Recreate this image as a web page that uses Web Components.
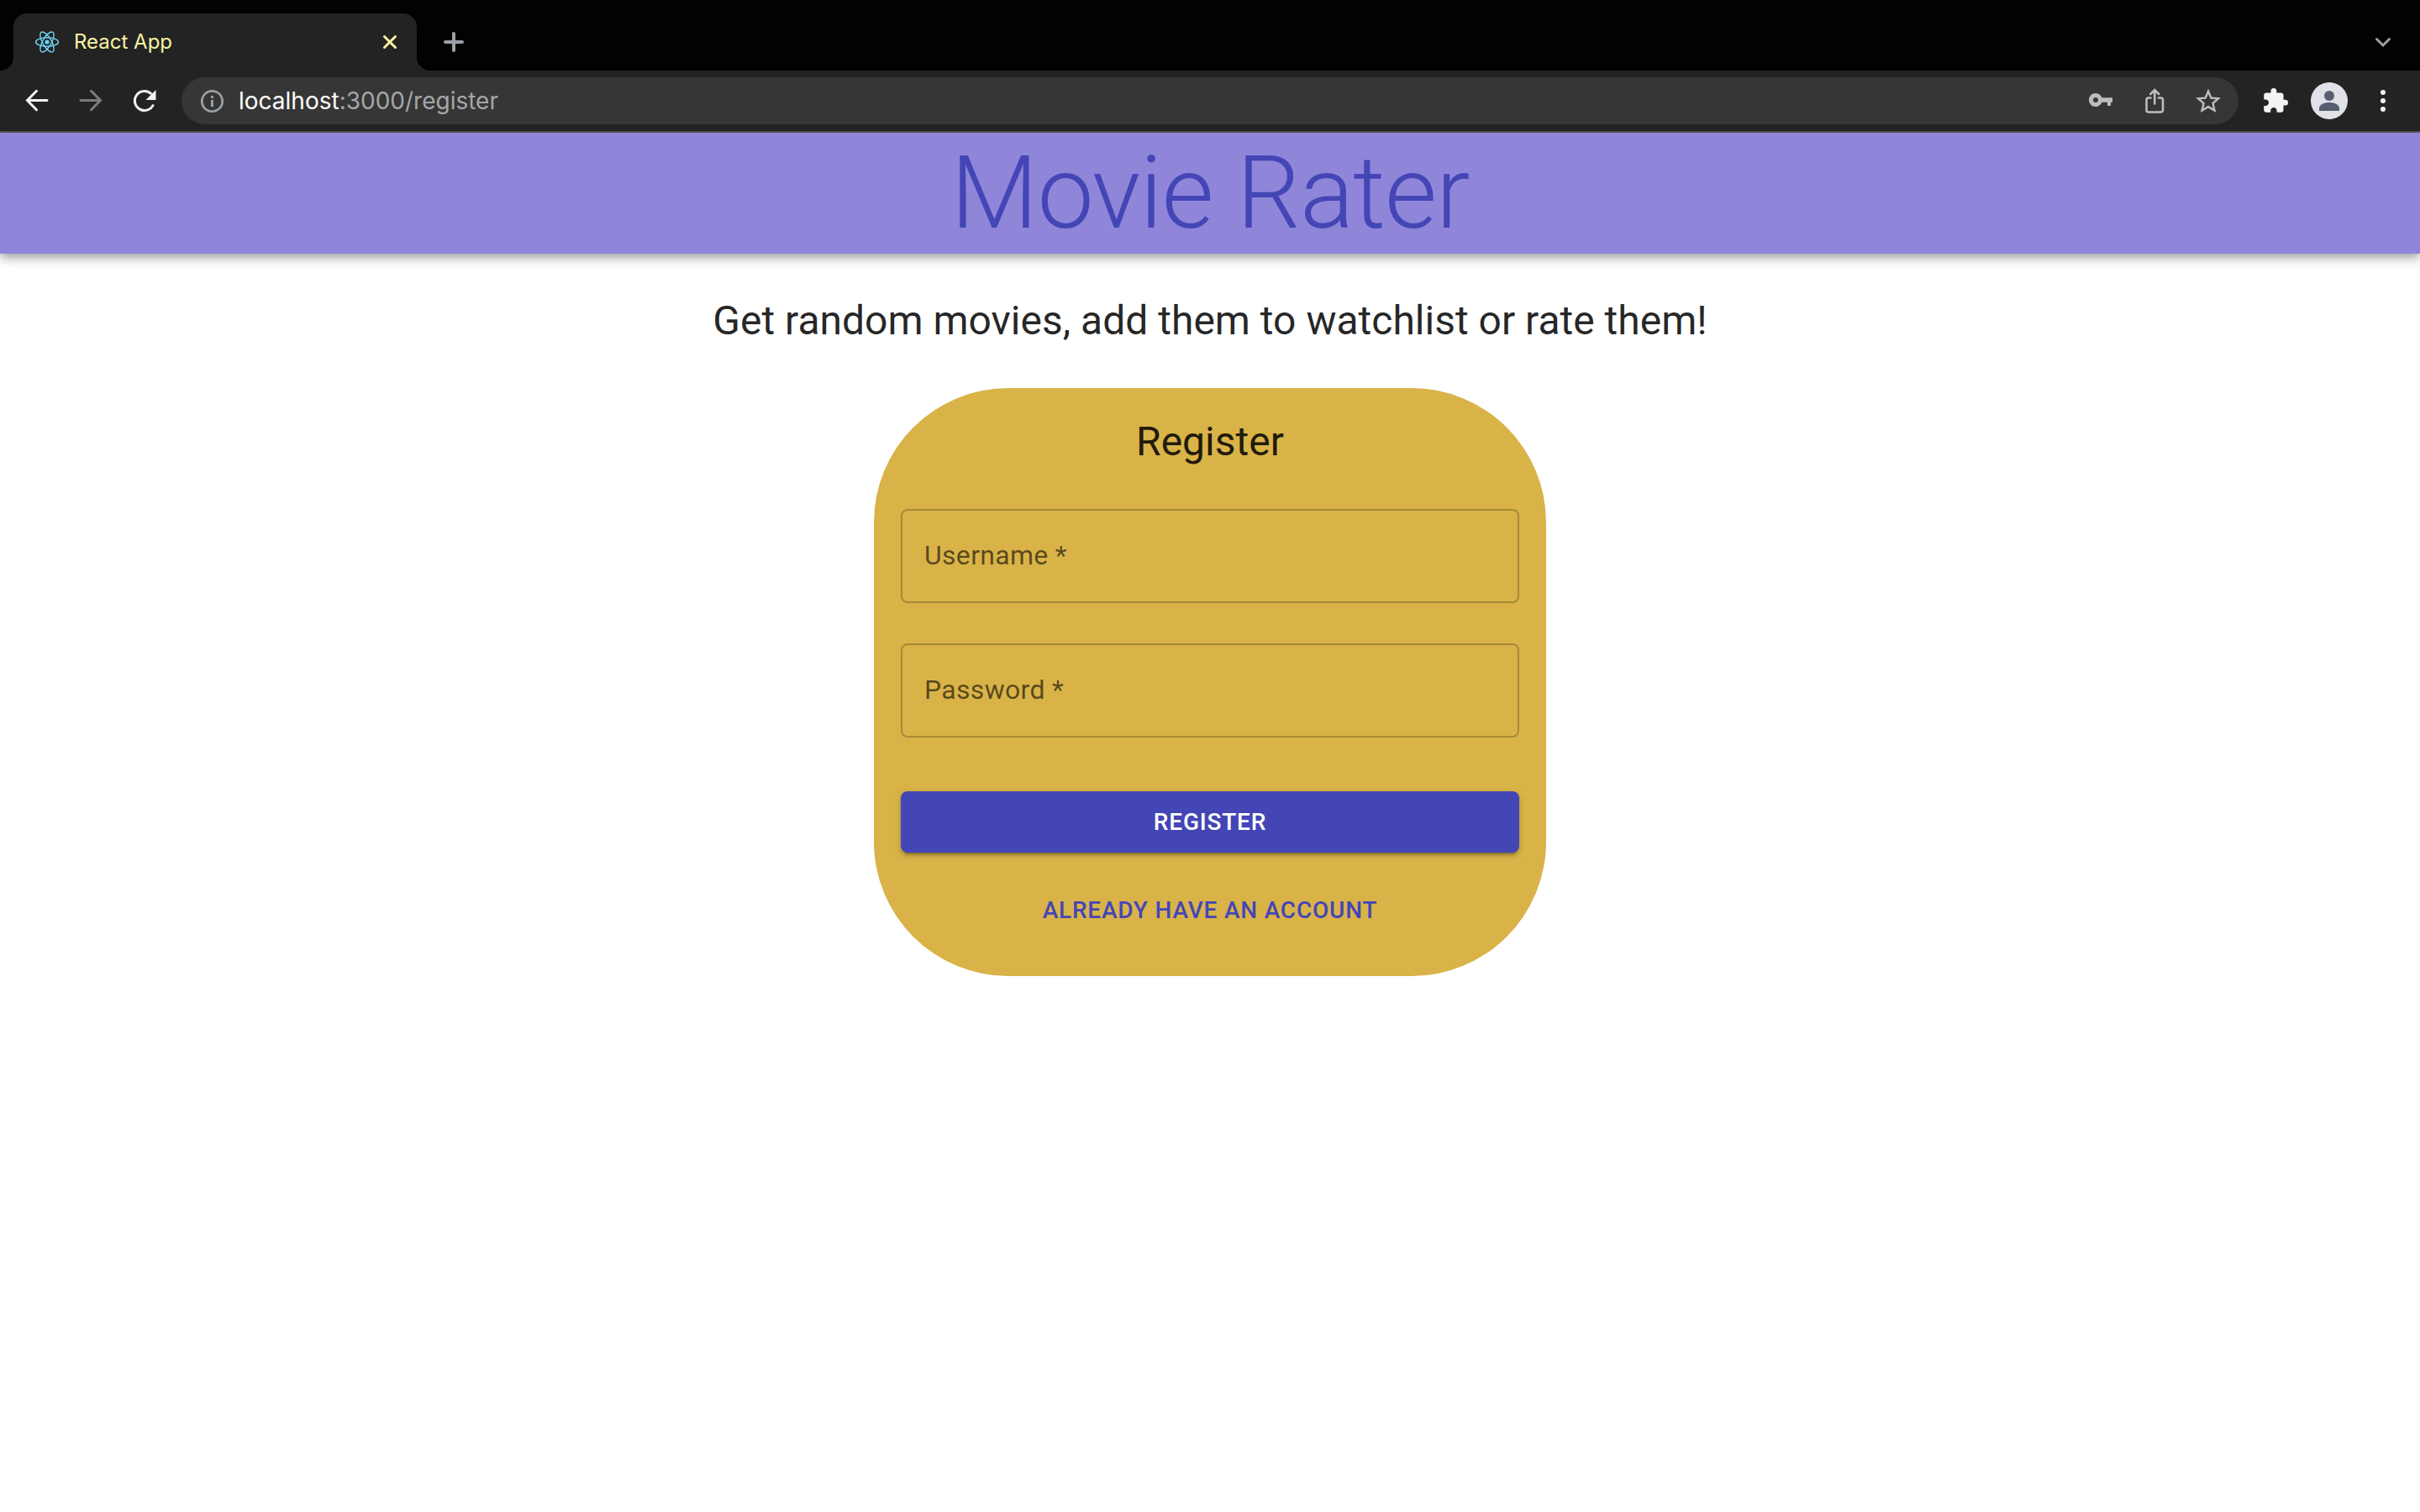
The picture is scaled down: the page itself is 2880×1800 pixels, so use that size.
<!DOCTYPE html>
<html lang="en">
<head>
<meta charset="utf-8">
<title>React App</title>
<style>
  body { margin: 0; background: #fff; font-family: Roboto, "Liberation Sans", sans-serif; color: rgba(0,0,0,.87); }
</style>
</head>
<body>
<browser-chrome>
  <browser-tab slot="tab">React App</browser-tab>
</browser-chrome>
<app-header>Movie Rater</app-header>
<main>
  <page-tagline>Get random movies, add them to watchlist or rate them!</page-tagline>
  <auth-card>
    <span slot="title">Register</span>
    <text-field name="username" type="text">Username</text-field>
    <text-field name="password" type="password">Password</text-field>
    <action-button slot="action" variant="contained">Register</action-button>
    <action-button slot="action" variant="text">Already have an account</action-button>
  </auth-card>
</main>

<script>
const define = (name, html, setup) => customElements.define(name, class extends HTMLElement {
  constructor() {
    super();
    this.attachShadow({ mode: "open" }).innerHTML = html;
  }
  connectedCallback() { if (setup) setup(this, this.shadowRoot); }
});

const ICONS = {
  react: `<g fill="none" stroke="#6fd3f5" stroke-width="1.4"><ellipse cx="16" cy="16" rx="13.5" ry="5.2"/><ellipse cx="16" cy="16" rx="13.5" ry="5.2" transform="rotate(60 16 16)"/><ellipse cx="16" cy="16" rx="13.5" ry="5.2" transform="rotate(120 16 16)"/></g><circle cx="16" cy="16" r="2.6" fill="#6fd3f5"/>`,
  close: `<path d="M9.5 9.5l13 13M22.5 9.5l-13 13" fill="none" stroke="currentColor" stroke-width="3" stroke-linecap="round"/>`,
  plus: `<path d="M16 6v20M6 16h20" fill="none" stroke="currentColor" stroke-width="4" stroke-linecap="round"/>`,
  chevron: `<path d="M8.5 12.5l7.5 7.5 7.5-7.5" fill="none" stroke="currentColor" stroke-width="3" stroke-linecap="round"/>`,
  back: `<path d="M28 15.500H5M15.500 4.300L4.500 15.500l11 11.200" fill="none" stroke="currentColor" stroke-width="3" stroke-linecap="round"/>`,
  forward: `<path d="M4 15.500h23M16.500 4.300l11 11.200-11 11.200" fill="none" stroke="currentColor" stroke-width="3" stroke-linecap="round"/>`,
  reload: `<path d="M26.500 20.500a11.500 11.500 0 1 1-2.300-12.500" fill="none" stroke="currentColor" stroke-width="3"/><path d="M29.500 3v12h-12z" fill="currentColor"/>`,
  info: `<circle cx="16.500" cy="16.500" r="12.2" fill="none" stroke="currentColor" stroke-width="2.800"/><path d="M15 15h3v8h-3zM15 10h3v3h-3z" fill="currentColor"/>`,
  key: `<path transform="translate(0 -1)" fill="currentColor" fill-rule="evenodd" d="M17.400 13.200A8 8 0 1 0 17.400 18.800H24V23h4v-4.200h2v-5.600zM10 19a3 3 0 1 1 0-6 3 3 0 0 1 0 6z"/>`,
  share: `<path d="M11.500 12.500H9a2.500 2.500 0 0 0-2.500 2.500v12A2.500 2.500 0 0 0 9 29.500h14.500a2.500 2.500 0 0 0 2.500-2.500V15a2.500 2.500 0 0 0-2.500-2.500h-2.500M16.200 19.500V4M11.200 8l5-5 5 5" fill="none" stroke="currentColor" stroke-width="2.600" stroke-linecap="round"/>`,
  star: `<path transform="translate(-2 -1.500) scale(1.500)" fill="currentColor" d="M22 9.240l-7.190-.620L12 2 9.190 8.630 2 9.240l5.460 4.730L5.820 21 12 17.270 18.180 21l-1.630-7.030L22 9.240zM12 15.400l-3.760 2.270 1-4.280-3.320-2.880 4.380-.380L12 6.100l1.710 4.040 4.380.380-3.320 2.880 1 4.280L12 15.400z"/>`,
  puzzle: `<path transform="translate(-.500 -.300) scale(1.370)" fill="currentColor" d="M20.500 11H19V7c0-1.100-.9-2-2-2h-4V3.500a2.500 2.500 0 0 0-5 0V5H4c-1.100 0-1.990.9-1.990 2v3.800H3.500c1.490 0 2.700 1.210 2.700 2.700s-1.210 2.700-2.700 2.700H2V20c0 1.100.9 2 2 2h3.800v-1.500c0-1.490 1.210-2.700 2.700-2.700s2.700 1.210 2.700 2.700V22H17c1.100 0 2-.9 2-2v-4h1.500a2.500 2.500 0 0 0 0-5z"/>`,
  menu: `<g fill="currentColor"><circle cx="16" cy="6" r="3"/><circle cx="16" cy="16" r="3"/><circle cx="16" cy="26" r="3"/></g>`,
  person: `<circle cx="16" cy="10" r="6" fill="currentColor"/><path d="M4 28v-3c0-4.500 6-7 12-7s12 2.500 12 7v3z" fill="currentColor"/>`
};

define("ui-icon", `
  <style>:host{display:block;width:32px;height:32px;flex:none} svg{display:block;width:100%;height:100%;overflow:visible}</style>
  <svg viewBox="0 0 32 32" aria-hidden="true"></svg>`,
  (el, root) => { root.querySelector("svg").innerHTML = ICONS[el.getAttribute("name")]; });

define("icon-button", `
  <style>
    :host{display:block;flex:none}
    button{display:block;margin:0;padding:0;border:0;background:none;color:inherit;cursor:pointer}
  </style>
  <button type="button"><slot></slot></button>`,
  (el, root) => root.querySelector("button").setAttribute("aria-label", el.getAttribute("label")));

define("browser-tab", `
  <style>
    :host{display:flex;align-items:center;box-sizing:border-box;width:480px;height:68px;padding:0 16px 0 24px;
      position:relative;background:#232323;border-radius:16px 16px 0 0;color:#faf3a5;
      font:24px/32px Inter,"Liberation Sans",sans-serif}
    :host::before,:host::after{content:"";position:absolute;bottom:0;width:16px;height:16px}
    :host::before{left:-16px;background:radial-gradient(circle at 0 0,transparent 16px,#232323 16px)}
    :host::after{right:-16px;background:radial-gradient(circle at 100% 0,transparent 16px,#232323 16px)}
    .title{flex:1;padding-left:16px}
  </style>
  <ui-icon name="react"></ui-icon>
  <span class="title"><slot></slot></span>
  <icon-button label="Close tab"><ui-icon name="close"></ui-icon></icon-button>`);

define("address-bar", `
  <style>
    :host{display:flex;align-items:center;flex:1;min-width:0;height:56px;box-sizing:border-box;padding:0 20px;
      border-radius:28px;background:#363636;color:#bdbdbd;font:28px/36px Inter,"Liberation Sans",sans-serif}
    .info{color:#9aa0a6}
    .url{flex:1;padding-left:16px;color:#a6a6a6}
    b{font-weight:400;color:#fff}
    .tools{display:flex;gap:32px}
  </style>
  <ui-icon name="info" class="info"></ui-icon>
  <span class="url"><b>localhost</b>:3000/register</span>
  <div class="tools">
    <icon-button label="Passwords"><ui-icon name="key"></ui-icon></icon-button>
    <icon-button label="Share"><ui-icon name="share"></ui-icon></icon-button>
    <icon-button label="Bookmark"><ui-icon name="star"></ui-icon></icon-button>
  </div>`);

define("browser-chrome", `
  <style>
    :host{display:block}
    .strip{display:flex;align-items:flex-end;height:84px;padding:0 28px 0 16px;background:#020202;color:#9aa0a6}
    .strip .side{display:flex;align-items:center;height:68px}
    .strip .new{flex:1;padding-left:28px}
    .bar{display:flex;align-items:center;height:72px;padding:0 28px;background:#232323;color:#f1f3f4;border-bottom:2px solid #555}
    .nav{display:flex;gap:32px;margin-right:28px}
    .off{color:#7c7c7c}
    .right{display:flex;align-items:center;gap:26px;margin-left:28px}
    .avatar{display:grid;place-items:center;width:44px;height:44px;border-radius:50%;background:#dfe1e6;color:#565e70}
  </style>
  <div class="strip">
    <slot name="tab"></slot>
    <div class="side new"><icon-button label="New tab"><ui-icon name="plus"></ui-icon></icon-button></div>
    <div class="side"><icon-button label="Search tabs"><ui-icon name="chevron"></ui-icon></icon-button></div>
  </div>
  <div class="bar">
    <div class="nav">
      <icon-button label="Back"><ui-icon name="back"></ui-icon></icon-button>
      <icon-button label="Forward" class="off"><ui-icon name="forward"></ui-icon></icon-button>
      <icon-button label="Reload"><ui-icon name="reload"></ui-icon></icon-button>
    </div>
    <address-bar></address-bar>
    <div class="right">
      <icon-button label="Extensions"><ui-icon name="puzzle"></ui-icon></icon-button>
      <icon-button label="Profile"><span class="avatar"><ui-icon name="person"></ui-icon></span></icon-button>
      <icon-button label="Menu"><ui-icon name="menu"></ui-icon></icon-button>
    </div>
  </div>`);

define("app-header", `
  <style>
    :host{display:block;background:#8f86da;color:#4446b6;text-align:center;
      box-shadow:0 4px 8px -2px rgba(0,0,0,.2),0 8px 10px rgba(0,0,0,.14),0 2px 20px rgba(0,0,0,.12)}
    h1{margin:0;font-size:120px;line-height:144px;font-weight:300;letter-spacing:-1px}
  </style>
  <h1><slot></slot></h1>`);

define("page-tagline", `
  <style>:host{display:block;padding:48px 0;text-align:center} p{margin:0;font-size:48px;line-height:64px}</style>
  <p><slot></slot></p>`);

define("auth-card", `
  <style>
    :host{display:block;box-sizing:border-box;width:100%;max-width:800px;margin:0 auto;padding:32px 32px 42px;border-radius:160px;background:#d9b348}
    h2{margin:0 0 48px;font-size:48px;line-height:64px;font-weight:400;text-align:center}
    form{margin:0}
    .fields{display:grid;gap:48px}
    .actions{display:grid;gap:32px;margin-top:64px}
  </style>
  <form>
    <h2><slot name="title"></slot></h2>
    <div class="fields"><slot></slot></div>
    <div class="actions"><slot name="action"></slot></div>
  </form>`);

define("text-field", `
  <style>
    :host{display:grid;height:112px}
    label,input{grid-area:1/1}
    label{padding:32px 28px 0;font-size:32px;line-height:46px;letter-spacing:.00938em;color:rgba(0,0,0,.6);pointer-events:none}
    input{box-sizing:border-box;width:100%;height:100%;margin:0;padding:0 28px;border:2px solid rgba(0,0,0,.23);border-radius:8px;background:none;font:32px/46px Roboto,sans-serif}
  </style>
  <input id="field" required>
  <label for="field"><slot></slot> *</label>`,
  (el, root) => { const i = root.querySelector("input"); i.type = el.getAttribute("type"); i.name = el.getAttribute("name"); });

define("action-button", `
  <style>
    :host{display:block}
    button{display:block;width:100%;margin:0;padding:12px 32px;border:0;border-radius:8px;background:none;color:#4446b6;cursor:pointer;
      font:500 28px/49px Roboto,sans-serif;letter-spacing:.02857em;text-transform:uppercase}
    :host([variant=contained]) button{background:#4446b6;color:#fff;
      box-shadow:0 6px 2px -4px rgba(0,0,0,.2),0 4px 4px rgba(0,0,0,.14),0 2px 10px rgba(0,0,0,.12)}
  </style>
  <button type="button"><slot></slot></button>`);
</script>
</body>
</html>
